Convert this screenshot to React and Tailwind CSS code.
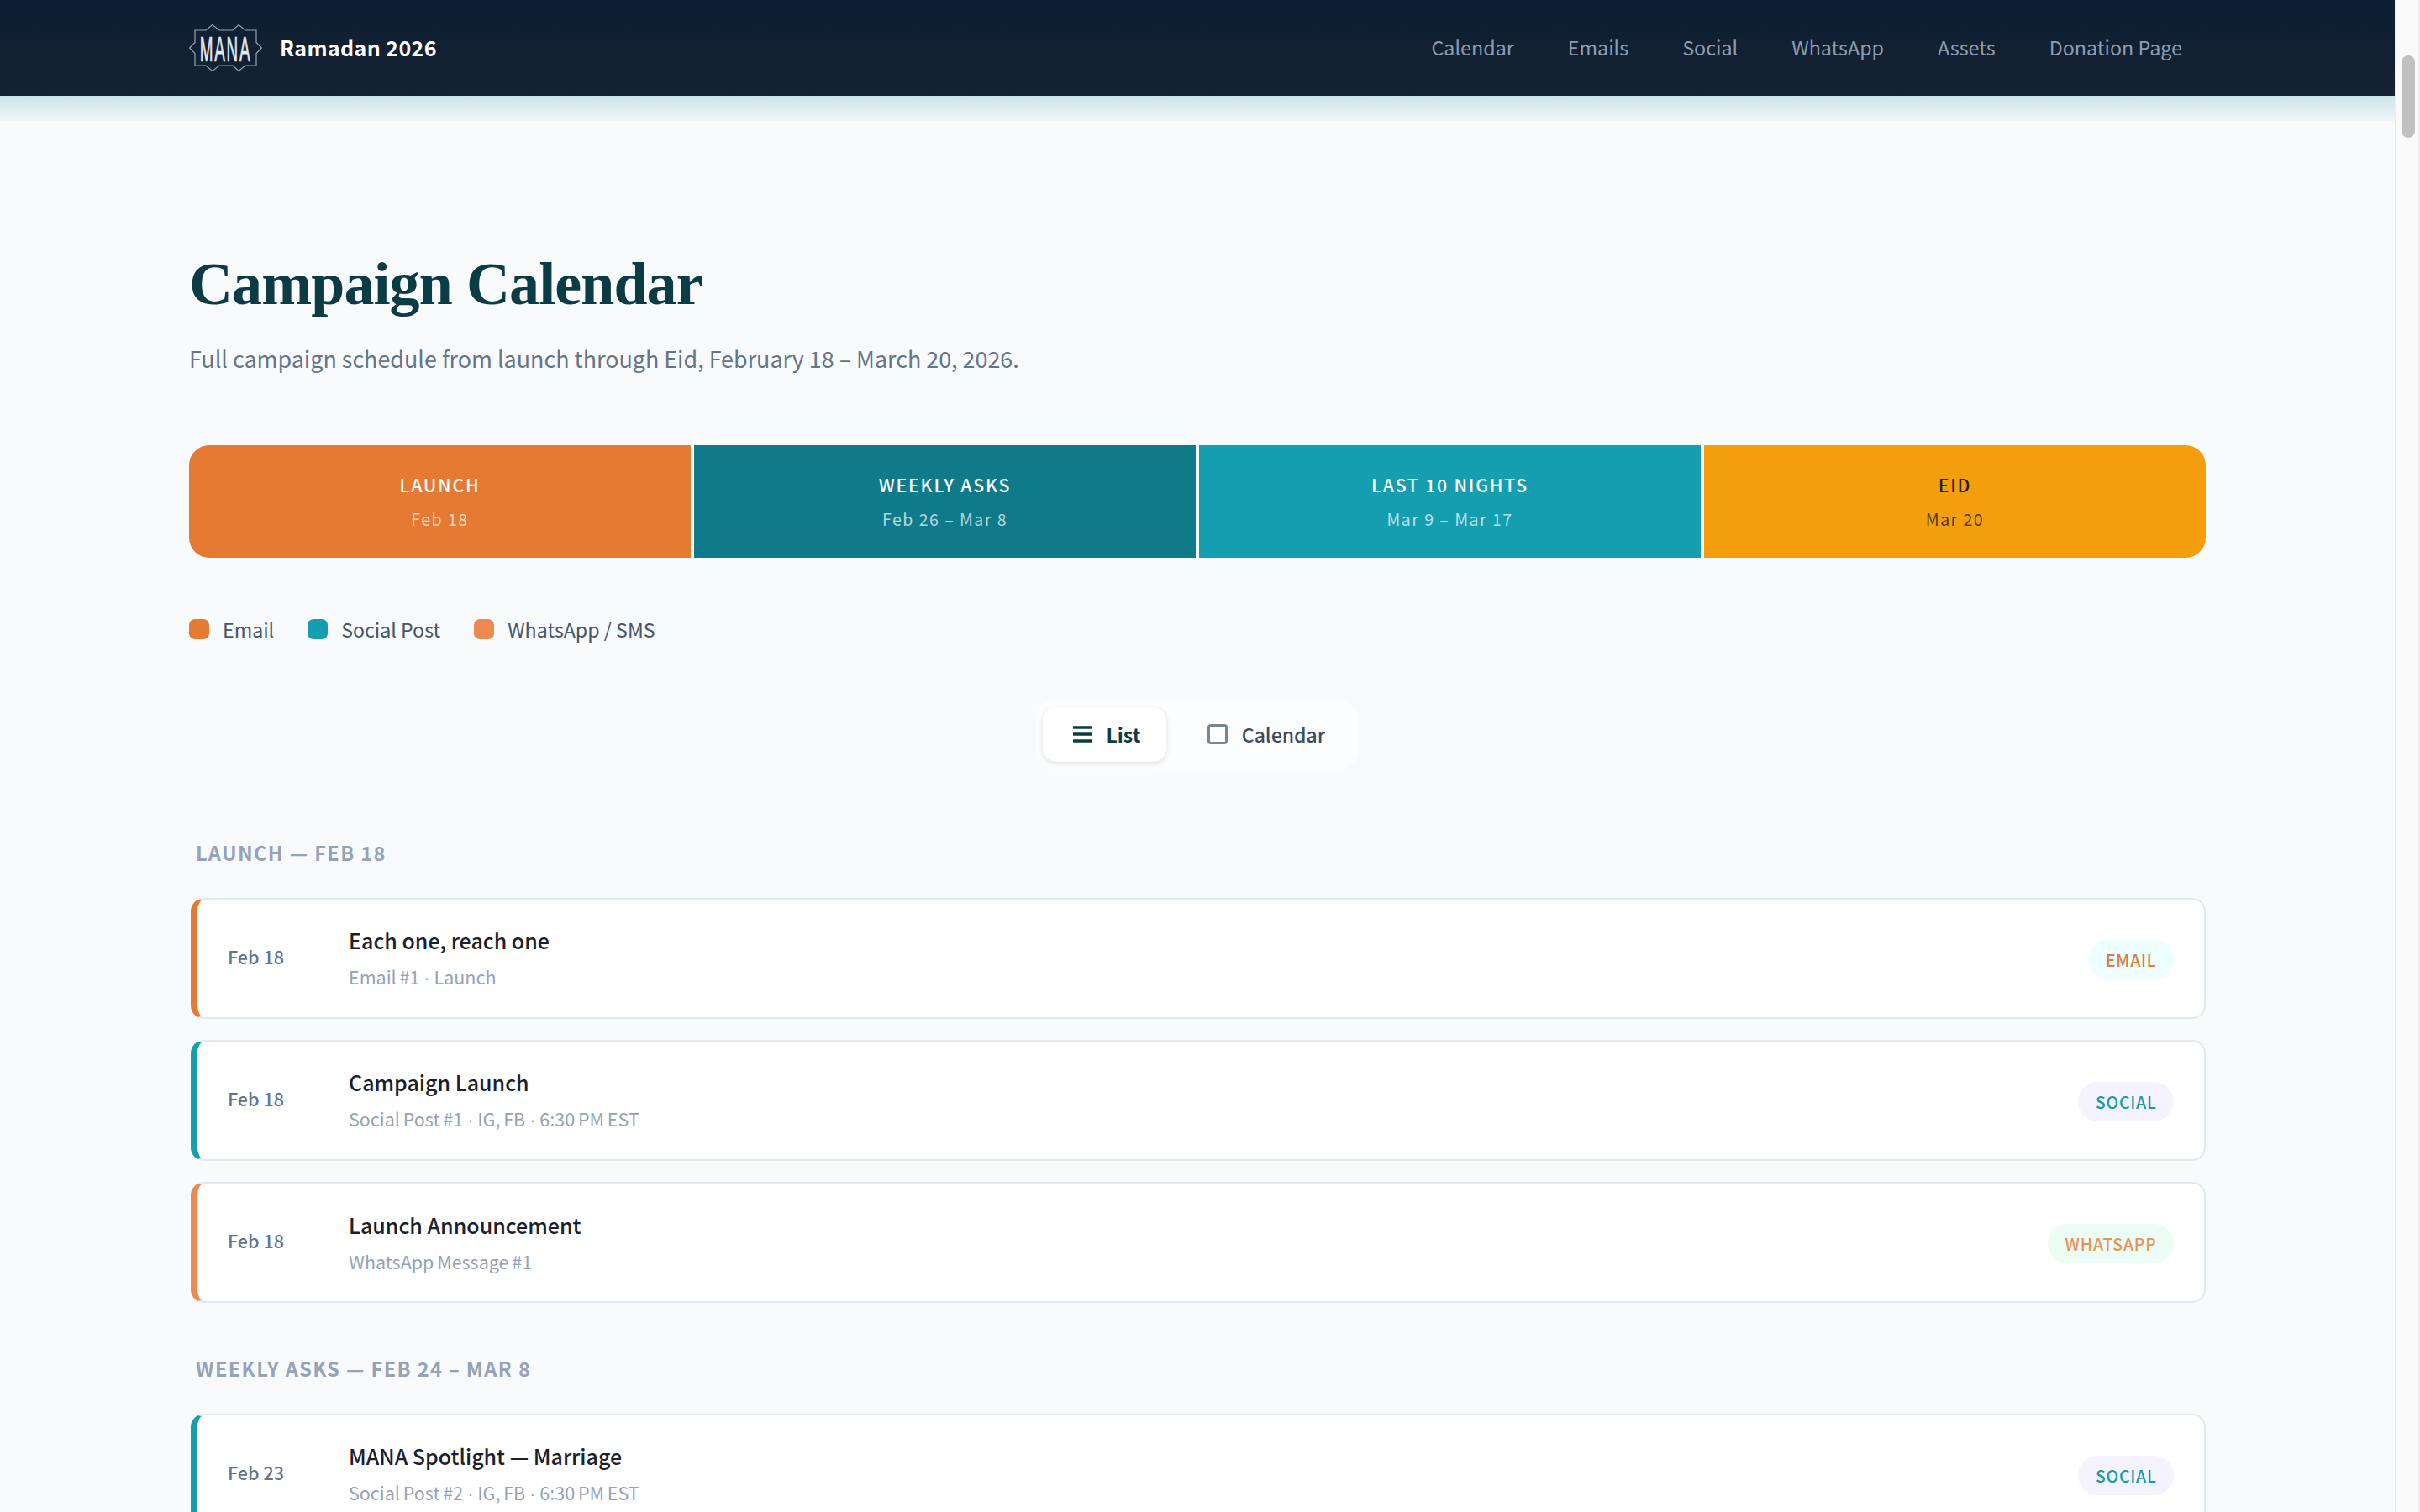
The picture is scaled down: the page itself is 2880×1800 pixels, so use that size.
const SANS = "font-['Noto_Sans_CJK_JP','Noto_Sans',sans-serif]";

function Logo() {
  return (
    <svg width="87" height="57" viewBox="0 0 87 57" fill="none" className="block shrink-0">
      <path
        d="M0.6 28 L7 21.5 V7 H20 L27.7 0.6 L36 7 H52 L59 0.6 L67 7 H80 V21.5 L86.4 28 L80 34.5 V49 H67 L59 55.5 L52 49 H36 L27.7 55.5 L20 49 H7 V34.5 Z"
        stroke="#94a3b8"
        strokeWidth="1.2"
      />
      <text
        transform="translate(43.5 44) scale(0.44 1)"
        textAnchor="middle"
        fill="#e2e8f0"
        stroke="#e2e8f0"
        strokeWidth="0.7"
        fontFamily="Liberation Sans, sans-serif"
        fontSize="43"
        letterSpacing="4"
      >
        MANA
      </text>
    </svg>
  );
}

const NAV = ["Calendar", "Emails", "Social", "WhatsApp", "Assets", "Donation Page"];

function Header() {
  return (
    <div>
      <header className="h-[114px] bg-gradient-to-b from-[#0d1e33] to-[#152232]">
        <div className="mx-auto flex h-full w-[2400px] items-center justify-between">
          <div className="flex items-center gap-[21px]">
            <Logo />
            <span className="pb-[1px] text-[25px] font-bold tracking-[0.4px] text-white">Ramadan 2026</span>
          </div>
          <nav className="flex items-center gap-[64px] pr-[28px] pb-[2px]">
            {NAV.map((n) => (
              <a key={n} className="text-[23.3px] text-[#8d9cb0]">
                {n}
              </a>
            ))}
          </nav>
        </div>
      </header>
      <div className="h-[30px] bg-gradient-to-b from-[#cde5e9] to-[#eff6f8]" />
    </div>
  );
}

const PHASES = [
  { t: "LAUNCH", d: "Feb 18", bg: "bg-[#e57a33]", c: "text-white", s: "text-white/70", r: "rounded-l-[24px]" },
  { t: "WEEKLY ASKS", d: "Feb 26 – Mar 8", bg: "bg-[#0f7a8a]", c: "text-white", s: "text-white/70", r: "" },
  { t: "LAST 10 NIGHTS", d: "Mar 9 – Mar 17", bg: "bg-[#159eb0]", c: "text-white", s: "text-white/70", r: "" },
  { t: "EID", d: "Mar 20", bg: "bg-[#f59e0b]", c: "text-[#1a202c]", s: "text-[#1a202c]/80", r: "rounded-r-[24px]" },
];

function Phases() {
  return (
    <div className="mt-[81px] grid h-[134px] grid-cols-4 gap-[4px]">
      {PHASES.map((p) => (
        <div key={p.t} className={`flex flex-col items-center justify-center ${p.bg} ${p.r}`}>
          <div className={`text-[21.2px] leading-[32px] font-medium tracking-[1.8px] ${p.c}`}>{p.t}</div>
          <div className={`mt-[10px] text-[19.5px] leading-[30px] tracking-[1.5px] ${p.s}`}>{p.d}</div>
        </div>
      ))}
    </div>
  );
}

function Legend() {
  const items = [
    ["Email", "bg-[#e57a33]"],
    ["Social Post", "bg-[#159eb0]"],
    ["WhatsApp / SMS", "bg-[#ed8a52]"],
  ];
  return (
    <div className="mt-[71px] flex h-[28px] items-center gap-[40px]">
      {items.map(([l, c]) => (
        <div key={l} className="flex items-center gap-[16px]">
          <span className={`h-[24px] w-[24px] rounded-[7px] ${c}`} />
          <span className="text-[23.2px] text-[#475569]">{l}</span>
        </div>
      ))}
    </div>
  );
}

function Toggle() {
  return (
    <div className="mt-[70px] flex justify-center">
      <div className="flex h-[82px] w-[384px] items-center rounded-[24px] bg-[#fcfdfe] px-[8px]">
        <div className="flex h-[65px] w-[147px] items-center justify-center gap-[17px] rounded-[16px] bg-white pl-[4px] shadow-[0_2px_6px_rgba(0,0,0,0.12)]">
          <svg width="24" height="24" viewBox="0 0 24 24" fill="none" stroke="#0b3c45" strokeWidth="3.6">
            <path d="M1 4H23M1 12H23M1 20H23" />
          </svg>
          <span className="text-[23px] font-semibold text-[#0b3c45]">List</span>
        </div>
        <div className="flex h-[65px] flex-1 items-center justify-center gap-[17px] pl-[17px]">
          <span className="h-[24px] w-[24px] rounded-[4px] border-[3px] border-[#7a8594]" />
          <span className="text-[23px] font-medium text-[#3e4c5e]">Calendar</span>
        </div>
      </div>
    </div>
  );
}

function Sub({ text }) {
  const parts = text.split(" · ");
  return (
    <div className="mt-[10px] text-[21.5px] leading-[32px] [word-spacing:-1px] text-[#94a3b8]">
      {parts.map((p, i) => (
        <span key={i}>
          {i > 0 && <span className="font-['Liberation_Sans',sans-serif]"> · </span>}
          {p}
        </span>
      ))}
    </div>
  );
}

function Row({ date, title, sub, tag, bar, tagBg, tagText }) {
  return (
    <div
      className={`mb-[25px] ml-[2px] flex h-[144px] items-center rounded-[16px] border-2 border-l-[8px] border-[#e2e8f0] bg-white pr-[36px] pl-[36px] ${bar}`}
    >
      <div className="w-[144px] shrink-0 pb-[3px] text-[21.6px] font-medium text-[#64748b]">{date}</div>
      <div className="flex-1">
        <div className="text-[25px] leading-[36px] font-medium text-[#1a202c]">{title}</div>
        <Sub text={sub} />
      </div>
      <span className={`mt-[3px] flex h-[47px] items-center rounded-full px-[20.5px] text-[19.4px] font-medium tracking-[0.8px] ${tagBg} ${tagText}`}>
        {tag}
      </span>
    </div>
  );
}

const EMAIL = { bar: "border-l-[#e57a33]", tagBg: "bg-[#ecfeff]", tagText: "text-[#e07b39]", tag: "EMAIL" };
const SOCIAL = { bar: "border-l-[#159eb0]", tagBg: "bg-[#f5f3ff]", tagText: "text-[#159aa8]", tag: "SOCIAL" };
const WA = { bar: "border-l-[#ed8a52]", tagBg: "bg-[#ecfdf5]", tagText: "text-[#e8935a]", tag: "WHATSAPP" };

function SectionTitle({ children, className }) {
  return (
    <h2 className={`pl-[8px] text-[23.5px] leading-[34px] font-bold tracking-[1.4px] text-[#94a3b8] ${className}`}>
      {children}
    </h2>
  );
}

function Scrollbar() {
  return (
    <div className="h-full w-[30px] shrink-0 border-r-2 border-l-2 border-[#ececec] bg-[#fafafa] pt-[66px]">
      <div className="ml-[6px] h-[98px] w-[16px] rounded-full bg-[#c1c1c1]" />
    </div>
  );
}

export default function App() {
  return (
    <div className={`flex h-screen w-full overflow-hidden bg-[#f8fafc] ${SANS}`}>
      <div className="min-w-0 flex-1 overflow-hidden">
        <Header />
        <main className="mx-auto w-[2400px]">
          <h1 className="mt-[154px] font-['Liberation_Serif',serif] text-[72px] leading-[80px] font-bold tracking-[-0.9px] text-[#0b3c45]">
            Campaign Calendar
          </h1>
          <p className="mt-[27px] text-[26.9px] leading-[44px] text-[#64748b]">
            Full campaign schedule from launch through Eid, February 18 – March 20, 2026.
          </p>
          <Phases />
          <Legend />
          <Toggle />
          <SectionTitle className="mt-[83px] mb-[37px]">LAUNCH — FEB 18</SectionTitle>
          <Row date="Feb 18" title="Each one, reach one" sub="Email #1 · Launch" {...EMAIL} />
          <Row date="Feb 18" title="Campaign Launch" sub="Social Post #1 · IG, FB · 6:30 PM EST" {...SOCIAL} />
          <Row date="Feb 18" title="Launch Announcement" sub="WhatsApp Message #1" {...WA} />
          <SectionTitle className="mt-[61px] mb-[37px]">WEEKLY ASKS — FEB 24 – MAR 8</SectionTitle>
          <Row date="Feb 23" title="MANA Spotlight — Marriage" sub="Social Post #2 · IG, FB · 6:30 PM EST" {...SOCIAL} />
        </main>
      </div>
      <Scrollbar />
    </div>
  );
}
